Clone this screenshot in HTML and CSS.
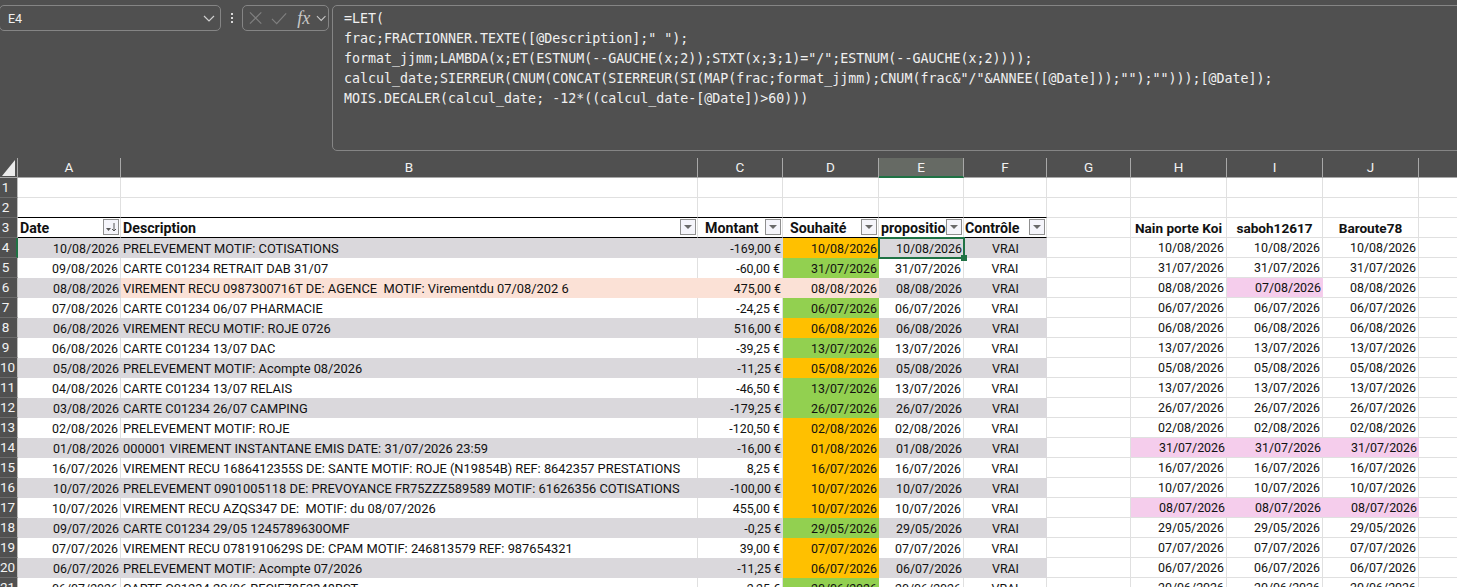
FILE: index.html
```html
<!DOCTYPE html>
<html lang="fr">
<head>
  <meta charset="UTF-8">
  <title>Classeur - E4</title>
  <link rel="stylesheet" href="styles.css">
</head>
<body>
  <div class="formula-bar">
    <div class="name-box">
      <span>E4</span>
      <svg class="chevron" width="12" height="7" viewBox="0 0 12 7"><path d="M1 1l5 5 5-5" fill="none" stroke="#d0d0d0" stroke-width="1.2"/></svg>
    </div>
    <div class="grip"><i></i><i></i><i></i></div>
    <div class="fx-box">
      <svg width="14" height="14" viewBox="0 0 14 14"><path d="M1 1l12 12M13 1L1 13" fill="none" stroke="#808080" stroke-width="1.2"/></svg>
      <svg class="check" width="17" height="13" viewBox="0 0 17 13"><path d="M1 7l5 5L16 1" fill="none" stroke="#808080" stroke-width="1.2"/></svg>
      <span class="fx">fx</span>
      <svg width="11" height="7" viewBox="0 0 11 7"><path d="M1 1l4.500 4.500L10 1" fill="none" stroke="#c8c8c8" stroke-width="1.1"/></svg>
    </div>
    <div class="formula">=LET(
frac;FRACTIONNER.TEXTE([@Description];" ");
format_jjmm;LAMBDA(x;ET(ESTNUM(--GAUCHE(x;2));STXT(x;3;1)="/";ESTNUM(--GAUCHE(x;2))));
calcul_date;SIERREUR(CNUM(CONCAT(SIERREUR(SI(MAP(frac;format_jjmm);CNUM(frac&amp;"/"&amp;ANNEE([@Date]));"");"")));[@Date]);
MOIS.DECALER(calcul_date; -12*((calcul_date-[@Date])&gt;60)))</div>
  </div>

  <table class="sheet">
    <colgroup>
      <col class="c-head"><col class="c-a"><col class="c-b"><col class="c-c"><col class="c-d"><col class="c-e">
      <col class="c-f"><col class="c-g"><col class="c-h"><col class="c-h"><col class="c-h"><col class="c-h">
    </colgroup>
    <thead>
      <tr>
        <th class="corner"><svg width="13" height="16" viewBox="0 0 13 16"><path d="M13 0v16H0z" fill="#ececec"/></svg></th>
        <th>A</th><th>B</th><th>C</th><th>D</th><th class="active">E</th><th>F</th><th>G</th><th>H</th><th>I</th><th>J</th><th>K</th>
      </tr>
    </thead>
    <tbody>
      <tr><th>1</th><td></td><td></td><td></td><td></td><td></td><td></td><td></td><td></td><td></td><td></td><td></td></tr>
      <tr class="above-table"><th>2</th><td></td><td></td><td></td><td></td><td></td><td></td><td></td><td></td><td></td><td></td><td></td></tr>
      <tr class="titles">
        <th>3</th>
        <td class="title">Date<span class="filter sorted"><svg width="11" height="9" viewBox="0 0 11 9"><path d="M0 5h5L2.500 8z" fill="#555"/><path d="M8 0v8M6 6l2 2 2-2" fill="none" stroke="#555"/></svg></span></td>
        <td class="title">Description<span class="filter"></span></td>
        <td class="title t-montant">Montant<span class="filter"></span></td>
        <td class="title t-souhaite">Souhaité<span class="filter"></span></td>
        <td class="title t-prop">proposition<span class="filter"></span></td>
        <td class="title t-controle">Contrôle<span class="filter"></span></td>
        <td></td>
        <td class="title-plain">Nain porte Koi</td>
        <td class="title-plain">saboh12617</td>
        <td class="title-plain">Baroute78</td>
        <td></td>
      </tr>
      <tr class="grey"><th class="current">4</th><td class="n">10/08/2026</td><td>PRELEVEMENT MOTIF: COTISATIONS</td><td class="n">-169,00 €</td><td class="n orange">10/08/2026</td><td class="n selected">10/08/2026<span class="cursor"><span class="handle"></span></span></td><td class="c">VRAI</td><td></td><td class="n">10/08/2026</td><td class="n">10/08/2026</td><td class="n">10/08/2026</td><td></td></tr>
      <tr><th>5</th><td class="n">09/08/2026</td><td>CARTE C01234 RETRAIT DAB 31/07</td><td class="n">-60,00 €</td><td class="n green">31/07/2026</td><td class="n">31/07/2026</td><td class="c">VRAI</td><td></td><td class="n">31/07/2026</td><td class="n">31/07/2026</td><td class="n">31/07/2026</td><td></td></tr>
      <tr class="grey"><th>6</th><td class="n">08/08/2026</td><td class="salmon">VIREMENT RECU 0987300716T DE: AGENCE  MOTIF: Virementdu 07/08/202 6</td><td class="n salmon">475,00 €</td><td class="n salmon">08/08/2026</td><td class="n">08/08/2026</td><td class="c">VRAI</td><td></td><td class="n">08/08/2026</td><td class="n pink">07/08/2026</td><td class="n">08/08/2026</td><td></td></tr>
      <tr><th>7</th><td class="n">07/08/2026</td><td>CARTE C01234 06/07 PHARMACIE</td><td class="n">-24,25 €</td><td class="n green">06/07/2026</td><td class="n">06/07/2026</td><td class="c">VRAI</td><td></td><td class="n">06/07/2026</td><td class="n">06/07/2026</td><td class="n">06/07/2026</td><td></td></tr>
      <tr class="grey"><th>8</th><td class="n">06/08/2026</td><td>VIREMENT RECU MOTIF: ROJE 0726</td><td class="n">516,00 €</td><td class="n orange">06/08/2026</td><td class="n">06/08/2026</td><td class="c">VRAI</td><td></td><td class="n">06/08/2026</td><td class="n">06/08/2026</td><td class="n">06/08/2026</td><td></td></tr>
      <tr><th>9</th><td class="n">06/08/2026</td><td>CARTE C01234 13/07 DAC</td><td class="n">-39,25 €</td><td class="n green">13/07/2026</td><td class="n">13/07/2026</td><td class="c">VRAI</td><td></td><td class="n">13/07/2026</td><td class="n">13/07/2026</td><td class="n">13/07/2026</td><td></td></tr>
      <tr class="grey"><th>10</th><td class="n">05/08/2026</td><td>PRELEVEMENT MOTIF: Acompte 08/2026</td><td class="n">-11,25 €</td><td class="n orange">05/08/2026</td><td class="n">05/08/2026</td><td class="c">VRAI</td><td></td><td class="n">05/08/2026</td><td class="n">05/08/2026</td><td class="n">05/08/2026</td><td></td></tr>
      <tr><th>11</th><td class="n">04/08/2026</td><td>CARTE C01234 13/07 RELAIS</td><td class="n">-46,50 €</td><td class="n green">13/07/2026</td><td class="n">13/07/2026</td><td class="c">VRAI</td><td></td><td class="n">13/07/2026</td><td class="n">13/07/2026</td><td class="n">13/07/2026</td><td></td></tr>
      <tr class="grey"><th>12</th><td class="n">03/08/2026</td><td>CARTE C01234 26/07 CAMPING</td><td class="n">-179,25 €</td><td class="n green">26/07/2026</td><td class="n">26/07/2026</td><td class="c">VRAI</td><td></td><td class="n">26/07/2026</td><td class="n">26/07/2026</td><td class="n">26/07/2026</td><td></td></tr>
      <tr><th>13</th><td class="n">02/08/2026</td><td>PRELEVEMENT MOTIF: ROJE</td><td class="n">-120,50 €</td><td class="n orange">02/08/2026</td><td class="n">02/08/2026</td><td class="c">VRAI</td><td></td><td class="n">02/08/2026</td><td class="n">02/08/2026</td><td class="n">02/08/2026</td><td></td></tr>
      <tr class="grey"><th>14</th><td class="n">01/08/2026</td><td>000001 VIREMENT INSTANTANE EMIS DATE: 31/07/2026 23:59</td><td class="n">-16,00 €</td><td class="n orange">01/08/2026</td><td class="n">01/08/2026</td><td class="c">VRAI</td><td></td><td class="n pink">31/07/2026</td><td class="n pink">31/07/2026</td><td class="n pink">31/07/2026</td><td></td></tr>
      <tr><th>15</th><td class="n">16/07/2026</td><td>VIREMENT RECU 1686412355S DE: SANTE MOTIF: ROJE (N19854B) REF: 8642357 PRESTATIONS</td><td class="n">8,25 €</td><td class="n orange">16/07/2026</td><td class="n">16/07/2026</td><td class="c">VRAI</td><td></td><td class="n">16/07/2026</td><td class="n">16/07/2026</td><td class="n">16/07/2026</td><td></td></tr>
      <tr class="grey"><th>16</th><td class="n">10/07/2026</td><td>PRELEVEMENT 0901005118 DE: PREVOYANCE FR75ZZZ589589 MOTIF: 61626356 COTISATIONS</td><td class="n">-100,00 €</td><td class="n orange">10/07/2026</td><td class="n">10/07/2026</td><td class="c">VRAI</td><td></td><td class="n">10/07/2026</td><td class="n">10/07/2026</td><td class="n">10/07/2026</td><td></td></tr>
      <tr><th>17</th><td class="n">10/07/2026</td><td>VIREMENT RECU AZQS347 DE:  MOTIF: du 08/07/2026</td><td class="n">455,00 €</td><td class="n orange">10/07/2026</td><td class="n">10/07/2026</td><td class="c">VRAI</td><td></td><td class="n pink">08/07/2026</td><td class="n pink">08/07/2026</td><td class="n pink">08/07/2026</td><td></td></tr>
      <tr class="grey"><th>18</th><td class="n">09/07/2026</td><td>CARTE C01234 29/05 1245789630OMF</td><td class="n">-0,25 €</td><td class="n green">29/05/2026</td><td class="n">29/05/2026</td><td class="c">VRAI</td><td></td><td class="n">29/05/2026</td><td class="n">29/05/2026</td><td class="n">29/05/2026</td><td></td></tr>
      <tr><th>19</th><td class="n">07/07/2026</td><td>VIREMENT RECU 0781910629S DE: CPAM MOTIF: 246813579 REF: 987654321</td><td class="n">39,00 €</td><td class="n orange">07/07/2026</td><td class="n">07/07/2026</td><td class="c">VRAI</td><td></td><td class="n">07/07/2026</td><td class="n">07/07/2026</td><td class="n">07/07/2026</td><td></td></tr>
      <tr class="grey"><th>20</th><td class="n">06/07/2026</td><td>PRELEVEMENT MOTIF: Acompte 07/2026</td><td class="n">-11,25 €</td><td class="n orange">06/07/2026</td><td class="n">06/07/2026</td><td class="c">VRAI</td><td></td><td class="n">06/07/2026</td><td class="n">06/07/2026</td><td class="n">06/07/2026</td><td></td></tr>
      <tr><th>21</th><td class="n">06/07/2026</td><td>CARTE C01234 20/06 RECIF7852348BST</td><td class="n">-2,25 €</td><td class="n green">20/06/2026</td><td class="n">20/06/2026</td><td class="c">VRAI</td><td></td><td class="n">20/06/2026</td><td class="n">20/06/2026</td><td class="n">20/06/2026</td><td></td></tr>
    </tbody>
  </table>
</body>
</html>
```

FILE: styles.css
```css
html, body {
  margin: 0;
  padding: 0;
  height: 100%;
  overflow: hidden;
  background-color: #505050;
}
body {
  font-family: Roboto, "Liberation Sans", sans-serif;
  font-size: 12.4px;
  color: #111111;
}

/* formula bar */
.formula-bar {
  display: flex;
  align-items: flex-start;
  height: 158px;
  padding-top: 5px;
  box-sizing: border-box;
  color: #f0f0f0;
}
.name-box {
  flex: none;
  display: flex;
  align-items: center;
  justify-content: space-between;
  width: 222px;
  height: 26px;
  margin-left: -1px;
  padding: 0 5px 0 8px;
  box-sizing: border-box;
  border: 1px solid #858585;
  border-radius: 5px;
  font-size: 12.5px;
}
.grip {
  flex: none;
  display: flex;
  flex-direction: column;
  gap: 2px;
  width: 21px;
  padding-top: 8px;
  align-items: center;
}
.grip i {
  width: 2px;
  height: 2px;
  background-color: #d8d8d8;
}
.fx-box {
  flex: none;
  display: flex;
  align-items: center;
  width: 87px;
  height: 26px;
  padding: 0 2px 0 6px;
  box-sizing: border-box;
  border: 1px solid #858585;
  border-radius: 5px;
}
.check {
  margin-left: 9px;
}
.fx {
  margin: 0 5px 0 10px;
  width: 14px;
  font-family: "Liberation Serif", serif;
  font-style: italic;
  font-size: 18px;
  color: #c8c8c8;
}
.formula {
  flex: none;
  width: 1140px;
  height: 146px;
  margin-left: 3px;
  padding: 3px 0 0 11px;
  box-sizing: border-box;
  border: 1px solid #858585;
  border-radius: 5px 0 0 5px;
  font-family: "DejaVu Sans Mono", monospace;
  font-size: 13.3px;
  line-height: 20px;
  white-space: pre;
}

/* grid */
.sheet {
  table-layout: fixed;
  width: 1515px;
  border-collapse: separate;
  border-spacing: 0;
  background-color: #ffffff;
}
.c-head { width: 18px; }
.c-a { width: 103px; }
.c-b { width: 577px; }
.c-c { width: 85px; }
.c-d { width: 96px; }
.c-e { width: 85px; }
.c-f { width: 83px; }
.c-g { width: 84px; }
.c-h { width: 96px; }
.sheet th, .sheet td {
  height: 20px;
  padding: 0;
  box-sizing: border-box;
  overflow: hidden;
  white-space: pre;
  line-height: 19px;
}
.sheet td {
  position: relative;
  padding: 0 2px;
  border-right: 1px solid #e0e0e0;
  border-bottom: 1px solid #e0e0e0;
}
.sheet th {
  background-color: #505050;
  color: #f2f2f2;
  font-weight: normal;
  font-size: 13.5px;
}
thead th {
  border-right: 1px solid #a8a8a8;
  border-bottom: 1px solid #a8a8a8;
  text-align: center;
}
.sheet thead th.active {
  line-height: 18px;
  background-color: #666a64;
  border-bottom: 2px solid #1f7244;
}
thead th.corner {
  padding: 1px 3px 0 2px;
  line-height: 0;
  text-align: left;
}
.sheet tbody th {
  padding-right: 6px;
  border-right: 1px solid #bdbdbd;
  border-bottom: 1px solid #6b6b6b;
  text-align: center;
}
.sheet tbody th.current {
  padding-right: 5px;
  border-right: 2px solid #1f7244;
}

tbody td:nth-child(3) {
  font-size: 12.85px;
}
.n {
  text-align: right;
}
.c {
  text-align: center;
}

/* table rows */
tr:nth-child(n+4) td:nth-child(-n+7) {
  border-bottom: none;
}
.grey td:nth-child(-n+7) {
  background-color: #dad8dc;
  border-right: none;
}
.sheet td.salmon {
  background-color: #fbe1d6;
}
.sheet td.orange {
  background-color: #ffc000;
  border-right: none;
}
.sheet td.green {
  background-color: #92d050;
  border-right: none;
}
.sheet td.pink {
  background-color: #f5cdec;
  border-right: none;
}

/* table header row */
.above-table td:nth-child(-n+7) {
  border-bottom-color: #000000;
}
.sheet td.title {
  padding-top: 1px;
  padding-right: 0;
  line-height: 18px;
  border-bottom-color: #000000;
  font-size: 14.2px;
  font-weight: bold;
}
.sheet td.t-montant { padding-left: 7px; }
.sheet td.t-souhaite { padding-left: 7px; }
.sheet td.t-controle { padding-left: 1px; }
.sheet td.title-plain {
  padding-top: 1px;
  line-height: 18px;
  font-size: 13.6px;
  font-weight: bold;
  text-align: center;
}
.filter {
  position: absolute;
  top: 1px;
  right: 1px;
  display: flex;
  align-items: center;
  justify-content: center;
  width: 16px;
  height: 16px;
  box-sizing: border-box;
  border: 1px solid #8f8f8f;
  background-color: #f5f5fb;
}
.filter::before {
  content: "";
  border-top: 4px solid #6a6a6a;
  border-left: 4px solid transparent;
  border-right: 4px solid transparent;
}
.filter.sorted::before {
  display: none;
}

/* selected cell */
.sheet td.selected {
  overflow: visible;
}
.cursor {
  position: absolute;
  z-index: 1;
  top: -1px;
  left: -1px;
  right: -1px;
  bottom: -1px;
  border: 2px solid #1f7244;
  pointer-events: none;
}
.handle {
  position: absolute;
  right: -4px;
  bottom: -4px;
  width: 6px;
  height: 6px;
  background-color: #1f7244;
}
```
